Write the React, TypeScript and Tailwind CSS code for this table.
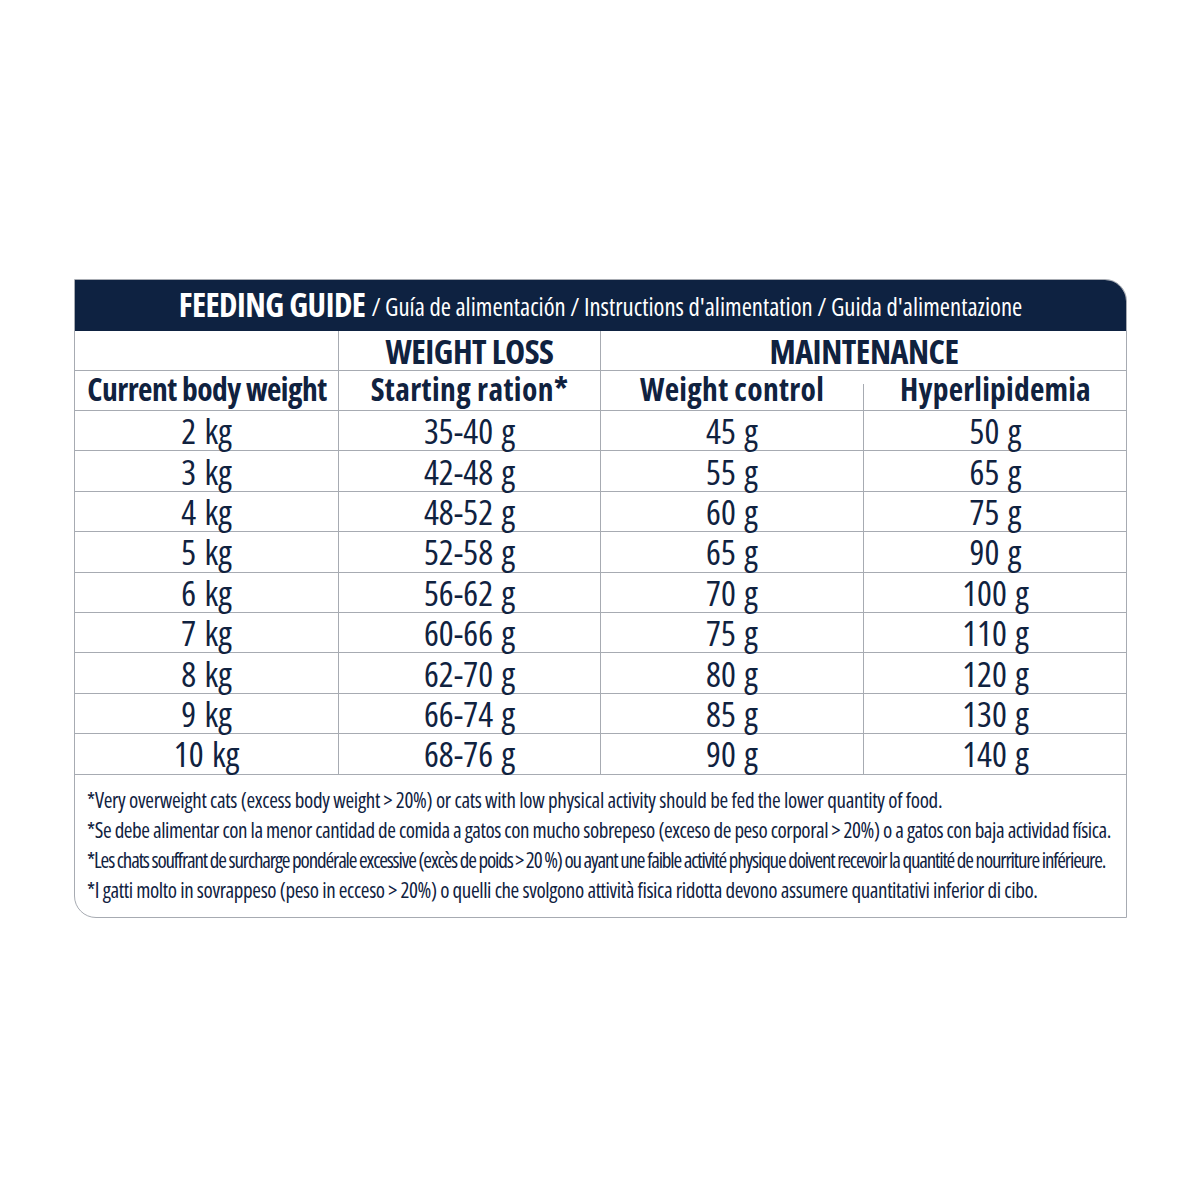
const rows: [string, string, string, string][] = [
  ['2 kg', '35-40 g', '45 g', '50 g'],
  ['3 kg', '42-48 g', '55 g', '65 g'],
  ['4 kg', '48-52 g', '60 g', '75 g'],
  ['5 kg', '52-58 g', '65 g', '90 g'],
  ['6 kg', '56-62 g', '70 g', '100 g'],
  ['7 kg', '60-66 g', '75 g', '110 g'],
  ['8 kg', '62-70 g', '80 g', '120 g'],
  ['9 kg', '66-74 g', '85 g', '130 g'],
  ['10 kg', '68-76 g', '90 g', '140 g'],
];

const notes: [string, string][] = [
  ['*Very overweight cats (excess body weight > 20%) or cats with low physical activity should be fed the lower quantity of food.', 'tracking-[-0.29px]'],
  ['*Se debe alimentar con la menor cantidad de comida a gatos con mucho sobrepeso (exceso de peso corporal > 20%) o a gatos con baja actividad física.', 'tracking-[-0.43px]'],
  ["*Les chats souffrant de surcharge pondérale excessive (excès de poids > 20 %) ou ayant une faible activité physique doivent recevoir la quantité de nourriture inférieure.", 'tracking-[-1.15px]'],
  ['*I gatti molto in sovrappeso (peso in ecceso > 20%) o quelli che svolgono attività fisica ridotta devono assumere quantitativi inferior di cibo.', 'tracking-[-0.36px]'],
];

const font = "font-['Open_Sans',sans-serif] [font-stretch:75%]";
const cell = 'flex items-center justify-center';
const line = 'border-[#a7abb2]';

export default function App() {
  return (
    <div className={`w-[1200px] h-[1200px] bg-white pt-[279px] pl-[74px] text-[#10223f] ${font}`}>
      <div className={`w-[1053px] border ${line} rounded-tr-[22px] rounded-bl-[22px] overflow-hidden`}>
        <div className="h-[51px] bg-[#0e2241] flex items-center justify-center gap-[6px] text-white pb-[2px]">
          <span className="text-[33px] font-bold tracking-[-0.5px]">FEEDING GUIDE</span>
          <span className="text-[24.7px] pt-[4px]">/ Guía de alimentación / Instructions d'alimentation / Guida d'alimentazione</span>
        </div>

        <div className="grid grid-cols-[264px_262px_263px_263px] font-bold text-[31.5px] leading-[36px]">
          <div className={`h-[40px] border-r border-b ${line}`} />
          <div className={`${cell} h-[40px] border-r border-b ${line} text-[34px] tracking-[-0.5px]`}>WEIGHT LOSS</div>
          <div className={`${cell} col-span-2 h-[40px] border-b ${line} text-[34px] tracking-[-0.5px]`}>MAINTENANCE</div>

          <div className={`${cell} h-[40px] border-r border-b ${line} pb-[4px] tracking-[-0.5px] pl-[1px]`}>Current body weight</div>
          <div className={`${cell} h-[40px] border-r border-b ${line} pb-[4px] tracking-[0.4px]`}>Starting ration*</div>
          <div className={`h-[40px] border-b ${line} flex`}>
            <div className={`${cell} flex-1 pb-[4px] tracking-[0.3px]`}>Weight control</div>
            <div className="w-px mt-[13px] bg-[#a7abb2]" />
          </div>
          <div className={`${cell} h-[40px] border-b ${line} pb-[4px] tracking-[0.2px]`}>Hyperlipidemia</div>
        </div>

        <div className="grid grid-cols-[264px_262px_263px_263px] text-[35px] leading-[36px] font-normal [font-stretch:86%] [word-spacing:2px]">
          {rows.map((r) => (
            <div key={r[0]} className="contents">
              <div className={`${cell} h-[40.4px] border-r border-b ${line} pt-[1px]`}>{r[0]}</div>
              <div className={`${cell} h-[40.4px] border-r border-b ${line} pt-[1px]`}>{r[1]}</div>
              <div className={`${cell} h-[40.4px] border-r border-b ${line} pt-[1px]`}>{r[2]}</div>
              <div className={`${cell} h-[40.4px] border-b ${line} pt-[1px]`}>{r[3]}</div>
            </div>
          ))}
        </div>

        <div className="px-[12px] pt-[10px] pb-[12px] flex flex-col text-[21px] leading-[30px] whitespace-nowrap">
          {notes.map(([n, t]) => (
            <div key={n} className={t}>{n}</div>
          ))}
        </div>
      </div>
    </div>
  );
}
